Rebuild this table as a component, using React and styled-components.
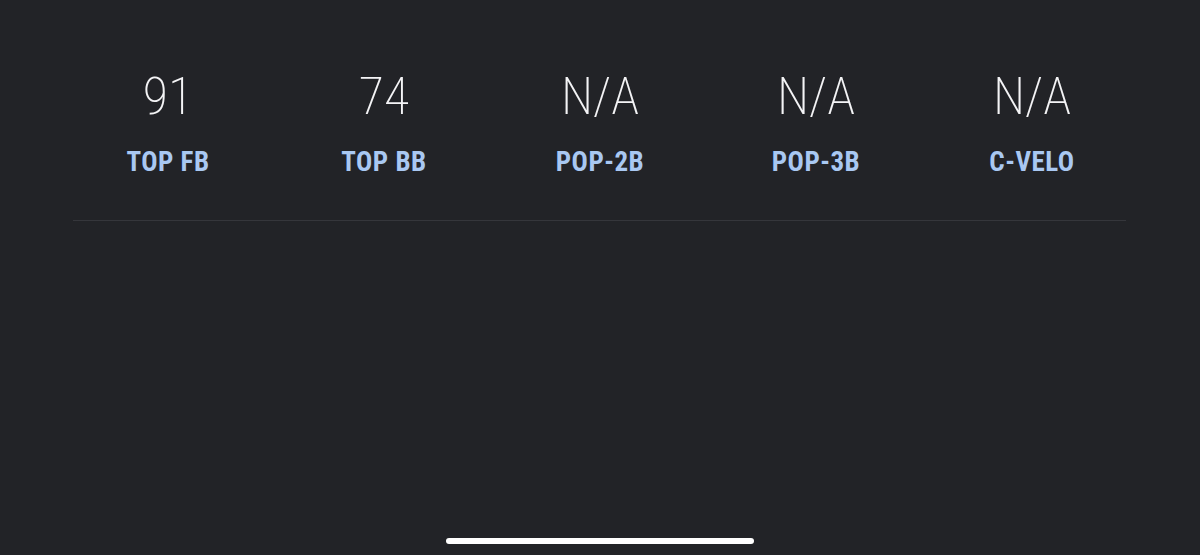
import React from "react";
import styled, { createGlobalStyle } from "styled-components";

const GlobalStyle = createGlobalStyle`
  html, body {
    margin: 0;
    padding: 0;
    background: #222327;
  }
  body {
    font-family: "Roboto Condensed", "Roboto", "Liberation Sans", sans-serif;
  }
`;

const Screen = styled.div`
  width: 1200px;
  height: 555px;
  display: flex;
  flex-direction: column;
  background: #222327;
  overflow: hidden;
`;

const StatsRow = styled.div`
  display: grid;
  grid-template-columns: repeat(5, 216px);
  padding: 69px 60px 0;
`;

const Stat = styled.div`
  display: flex;
  flex-direction: column;
  align-items: center;
`;

const Value = styled.div`
  color: #f4f4f6;
  font-size: 52px;
  font-weight: 250;
  font-stretch: condensed;
  line-height: 56px;
`;

const Label = styled.div`
  margin-top: 23px;
  color: #a9c8f2;
  font-size: 27px;
  font-weight: 700;
  font-stretch: condensed;
  letter-spacing: 0.5px;
  line-height: 28px;
`;

const Divider = styled.div`
  margin: 44px 74px 0 73px;
  height: 1px;
  background: #35363b;
`;

const Spacer = styled.div`
  flex: 1;
`;

const HomeIndicator = styled.div`
  align-self: center;
  width: 308px;
  height: 6px;
  border-radius: 3px;
  background: #ffffff;
  margin-bottom: 11px;
`;

const stats = [
  { value: "91", label: "TOP FB" },
  { value: "74", label: "TOP BB" },
  { value: "N/A", label: "POP-2B" },
  { value: "N/A", label: "POP-3B" },
  { value: "N/A", label: "C-VELO" },
];

export default function App() {
  return (
    <Screen>
      <GlobalStyle />
      <StatsRow>
        {stats.map((s) => (
          <Stat key={s.label}>
            <Value>{s.value}</Value>
            <Label>{s.label}</Label>
          </Stat>
        ))}
      </StatsRow>
      <Divider />
      <Spacer />
      <HomeIndicator />
    </Screen>
  );
}
